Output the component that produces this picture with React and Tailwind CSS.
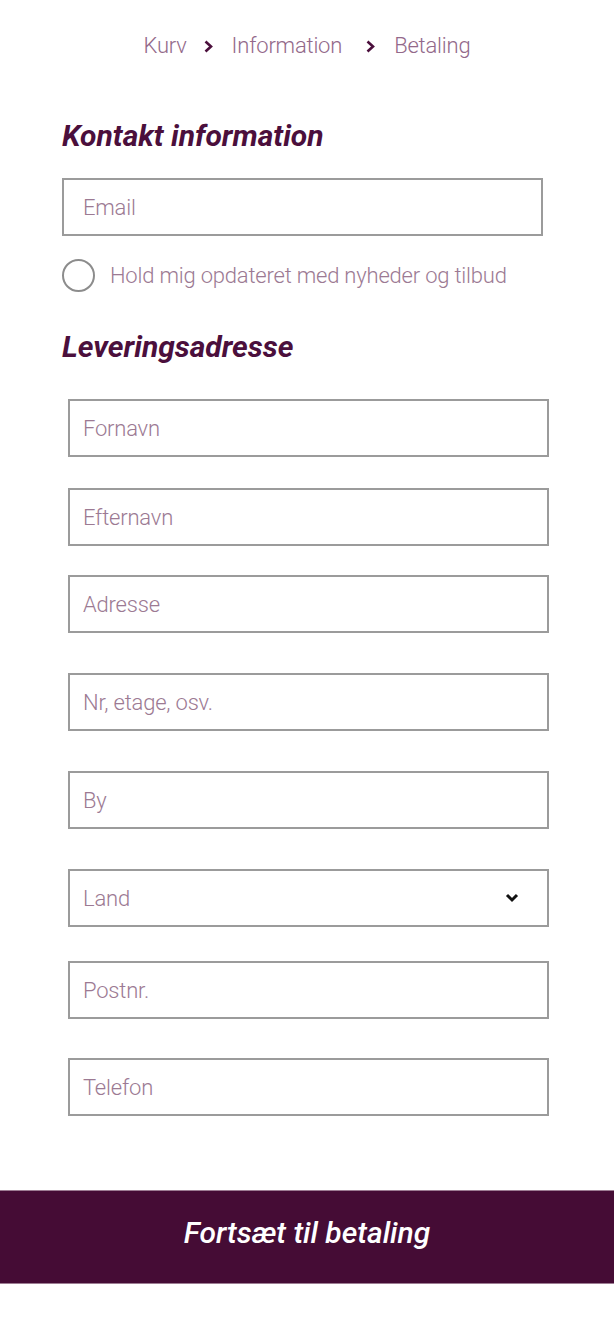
import { useState } from "react";

const FONT = { fontFamily: "Roboto, 'Noto Sans', sans-serif" };
const LIGHT = { fontFamily: "'Roboto Light', Roboto, sans-serif", fontWeight: 300 };

const ADDRESS_FIELDS = [
  { key: "firstName", label: "Fornavn", gap: "mt-[35px]" },
  { key: "lastName", label: "Efternavn", gap: "mt-[31px]" },
  { key: "address", label: "Adresse", gap: "mt-[29px]" },
  { key: "floor", label: "Nr, etage, osv.", gap: "mt-[40px]" },
  { key: "city", label: "By", gap: "mt-[40px]" },
  { key: "country", label: "Land", gap: "mt-[40px]", select: true },
  { key: "zip", label: "Postnr.", gap: "mt-[34px]" },
  { key: "phone", label: "Telefon", gap: "mt-[39px]" },
];

function Chevron({ className }) {
  return (
    <svg className={className} width="9" height="13" viewBox="0 0 9 13" fill="none">
      <path d="M1.5 1.5 L7 6.5 L1.5 11.5" stroke="currentColor" strokeWidth="2.6" strokeLinejoin="miter" />
    </svg>
  );
}

function TextField({ label, className }) {
  return (
    <input
      type="text"
      placeholder={label}
      style={LIGHT}
      className={[
        "block h-[58px] w-[481px] border-2 border-[#9b9b9b] bg-white pl-[13px] text-[22px] tracking-[-0.2px] text-[#4b0f3c] outline-none placeholder:text-[#9c7a93]",
        className,
      ].join(" ")}
    />
  );
}

function SelectField({ label, className }) {
  return (
    <div className={["relative w-[481px]", className].join(" ")}>
      <select
        defaultValue=""
        style={LIGHT}
        className="block h-[58px] w-full appearance-none rounded-none border-2 border-[#9b9b9b] bg-white pl-[13px] text-[22px] tracking-[-0.2px] text-[#9c7a93] outline-none"
      >
        <option value="">{label}</option>
        <option value="dk">Danmark</option>
      </select>
      <svg
        className="pointer-events-none absolute right-[30px] top-[24px]"
        width="14"
        height="10"
        viewBox="0 0 14 10"
        fill="none"
      >
        <path d="M2 2 L7 7 L12 2" stroke="#111" strokeWidth="3" />
      </svg>
    </div>
  );
}

export default function App() {
  const [subscribed, setSubscribed] = useState(false);

  return (
    <div className="min-h-[1322px] w-full bg-white" style={FONT}>
      <nav
        style={LIGHT}
        className="flex items-center justify-center pt-[33px] text-[22px] leading-[26px] tracking-[-0.2px] text-[#93698a]"
      >
        <span>Kurv</span>
        <Chevron className="ml-[17px] mr-[19px] text-[#4b0f3c]" />
        <span>Information</span>
        <Chevron className="ml-[24px] mr-[19px] text-[#4b0f3c]" />
        <span>Betaling</span>
      </nav>

      <form className="pl-[62px]" onSubmit={(event) => event.preventDefault()}>
        <h2 className="mt-[60px] text-[30px] font-bold italic leading-[34px] text-[#4b0f3c]">
          Kontakt information
        </h2>

        <TextField label="Email" className="mt-[25px] pl-[19px]" />

        <button
          type="button"
          onClick={() => setSubscribed(!subscribed)}
          className="mt-[23px] flex items-center gap-[15px]"
        >
          <span className="flex h-[33px] w-[33px] items-center justify-center rounded-full border-2 border-[#8c8c8c]">
            {subscribed ? <span className="h-[17px] w-[17px] rounded-full bg-[#4b0f3c]" /> : null}
          </span>
          <span style={LIGHT} className="text-[22px] tracking-[-0.2px] text-[#9c7a93]">
            Hold mig opdateret med nyheder og tilbud
          </span>
        </button>

        <h2 className="mt-[38px] text-[30px] font-bold italic leading-[34px] text-[#4b0f3c]">
          Leveringsadresse
        </h2>

        <div className="pl-[6px]">
          {ADDRESS_FIELDS.map((field) =>
            field.select ? (
              <SelectField key={field.key} label={field.label} className={field.gap} />
            ) : (
              <TextField key={field.key} label={field.label} className={field.gap} />
            ),
          )}
        </div>
      </form>

      <button
        type="submit"
        className="mt-[74px] flex h-[94px] w-full items-center justify-center border-y border-[#9d7d93] bg-[#450c35] pb-[10px] text-[30px] font-medium italic text-white"
      >
        Fortsæt til betaling
      </button>
    </div>
  );
}
